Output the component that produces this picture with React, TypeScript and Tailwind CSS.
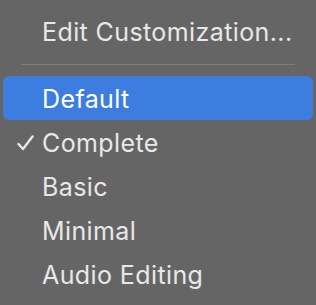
const items = ["Default", "Complete", "Basic", "Minimal", "Audio Editing"];

function Check() {
  return (
    <svg width="17" height="16" viewBox="0 0 17 16" className="absolute left-[14px] top-[15px]">
      <path d="M1.5 9 L6 14 L15.5 1.5" fill="none" stroke="#e8e8e8" strokeWidth="2.4" strokeLinecap="round" strokeLinejoin="round" />
    </svg>
  );
}

export default function App() {
  return (
    <div
      className="w-[316px] h-[305px] overflow-hidden bg-[#656565] text-[#e8e8e8] pt-[9px]"
      style={{ fontFamily: "Inter, 'Liberation Sans', sans-serif" }}
    >
      <div className="h-[44px] flex items-center pt-[4px] pl-[42px] text-[25px] tracking-[0.4px]">Edit Customization...</div>
      <div className="h-[23px] flex items-center px-[21px]">
        <div className="h-px w-full bg-[#7d7d7d]" />
      </div>
      {items.map((label, i) => (
        <div
          key={label}
          className={
            "relative mx-[3px] h-[44px] flex items-center pt-[4px] pl-[39px] text-[25px] tracking-[0.4px] rounded-[6px] " +
            (i === 0 ? "bg-[#3c7ddf] text-white" : "")
          }
        >
          {i === 1 && <Check />}
          {label}
        </div>
      ))}
    </div>
  );
}
